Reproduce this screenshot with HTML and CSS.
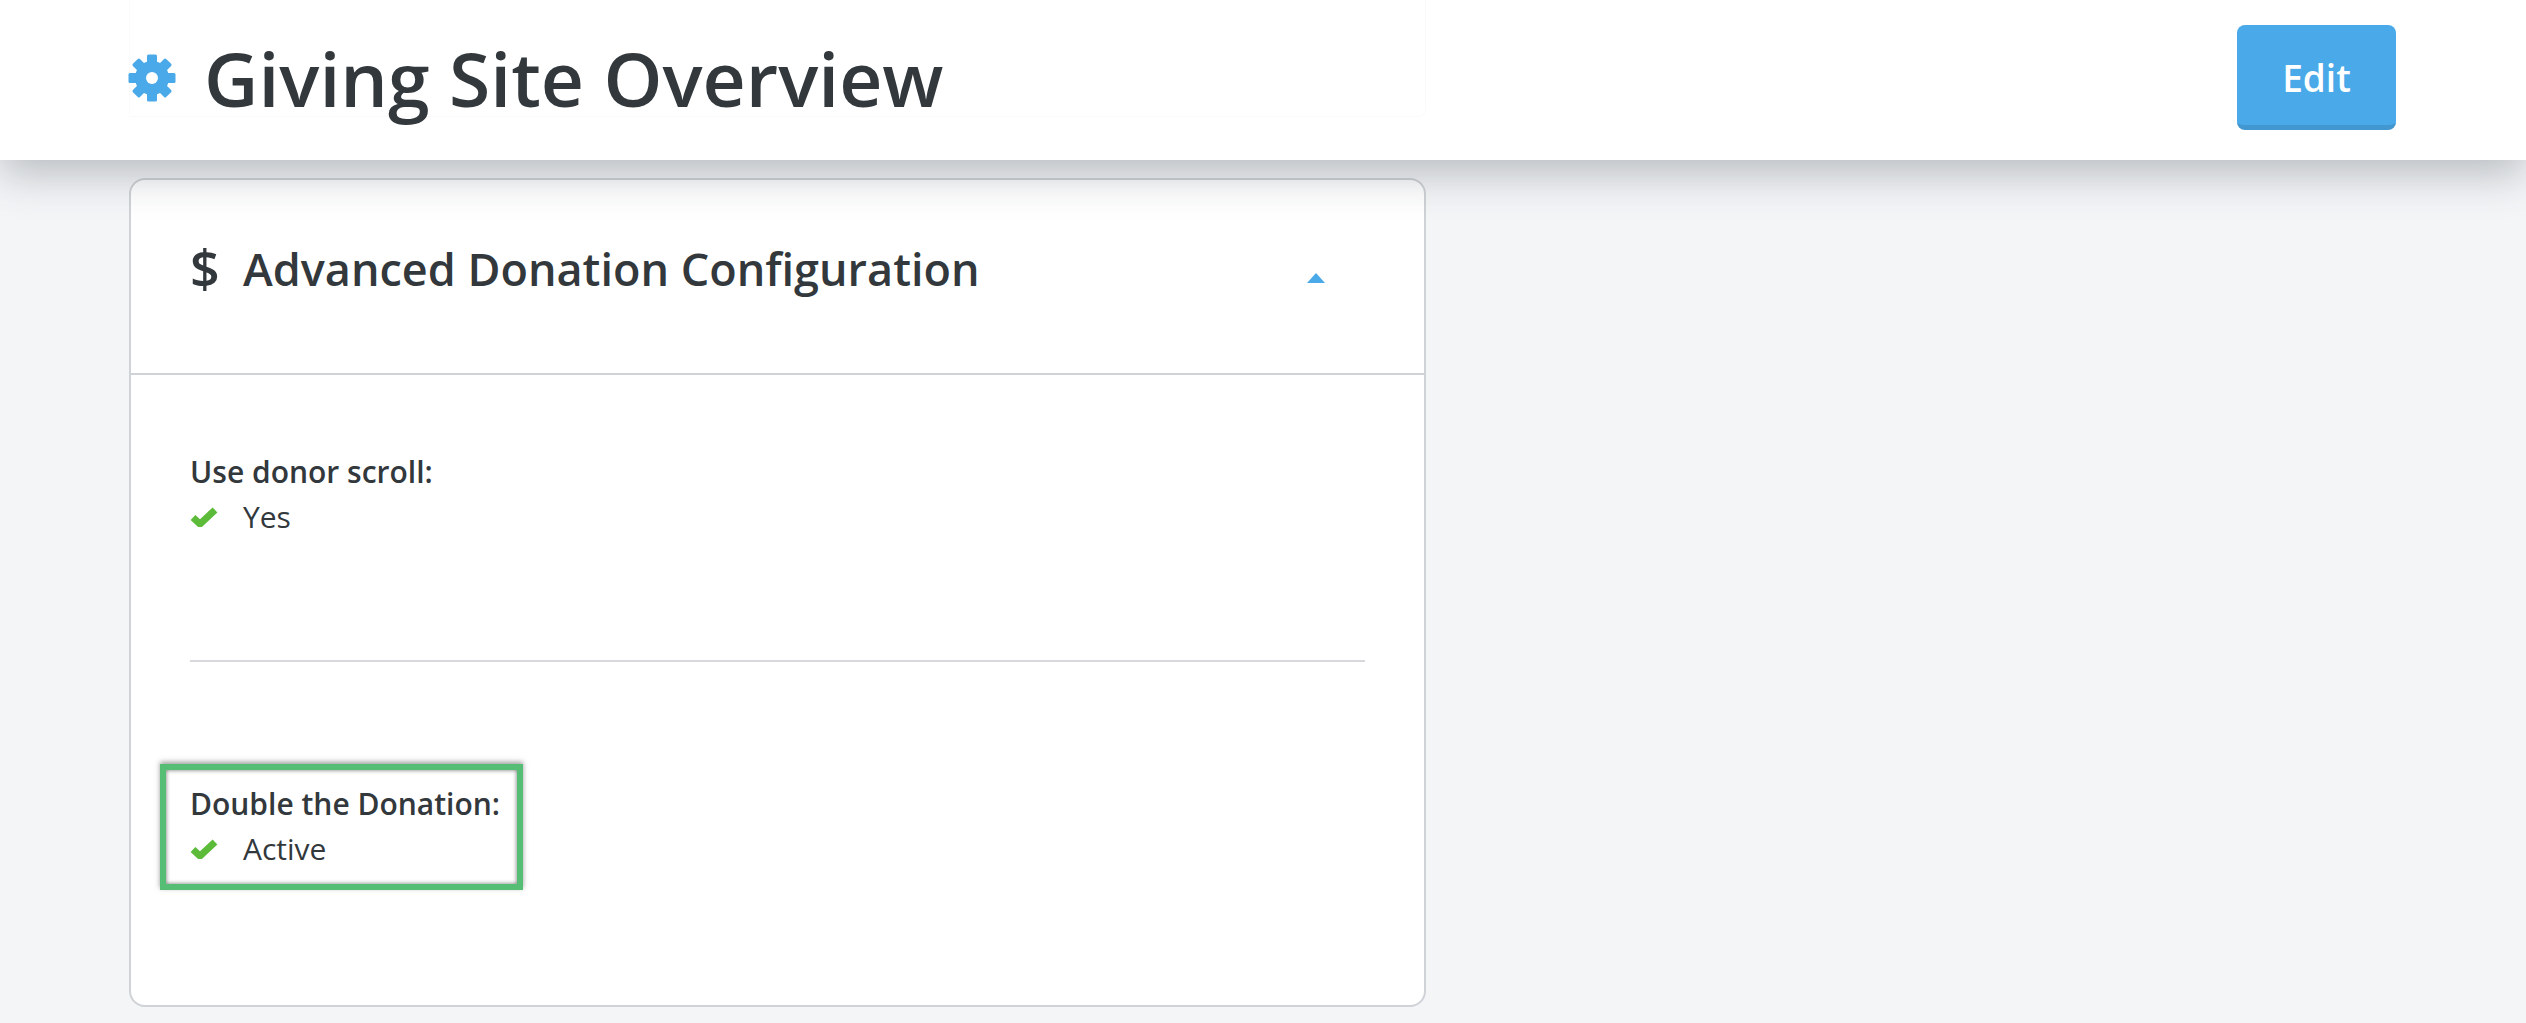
FILE: index.html
```html
<!DOCTYPE html>
<html lang="en">
<head>
<meta charset="UTF-8">
<title>Giving Site Overview</title>
<link rel="stylesheet" href="styles.css">
</head>
<body>
<header class="topbar">
  <div class="topbar-title">
    <svg class="gear" viewBox="-24 -24 48 48" aria-hidden="true">
      <g class="gear-teeth">
        <rect x="-5" y="-23.5" width="10" height="47" rx="1.5"/>
        <rect x="-5" y="-23.5" width="10" height="47" rx="1.5" transform="rotate(45)"/>
        <rect x="-5" y="-23.5" width="10" height="47" rx="1.5" transform="rotate(90)"/>
        <rect x="-5" y="-23.5" width="10" height="47" rx="1.5" transform="rotate(135)"/>
      </g>
      <circle class="gear-body" r="17"/>
      <circle class="gear-hole" r="6"/>
    </svg>
    <h1>Giving Site Overview</h1>
  </div>
  <button class="btn-edit" type="button">Edit</button>
</header>

<main class="page">
  <section class="card">
    <div class="card-head">
      <span class="card-icon">$</span>
      <h2>Advanced Donation Configuration</h2>
      <span class="caret"></span>
    </div>
    <div class="card-body">
      <div class="field">
        <div class="field-label">Use donor scroll:</div>
        <div class="field-value">
          <svg class="check" viewBox="0 0 28 20" aria-hidden="true"><path d="M3 10.5l7 6.5L25 3"/></svg>
          <span>Yes</span>
        </div>
      </div>
      <hr class="rule">
      <div class="field field-marked">
        <div class="field-label">Double the Donation:</div>
        <div class="field-value">
          <svg class="check" viewBox="0 0 28 20" aria-hidden="true"><path d="M3 10.5l7 6.5L25 3"/></svg>
          <span>Active</span>
        </div>
      </div>
    </div>
  </section>
</main>
</body>
</html>
```

FILE: styles.css
```css
:root {
  --bg: #f4f5f7;
  --text: #32383c;
  --blue: #4aa9e8;
  --line: #cfd2d6;
  --green: #5dbb3a;
}

* { margin: 0; padding: 0; box-sizing: border-box; }

html, body { height: 100%; }

body {
  background: var(--bg);
  color: var(--text);
  font-family: "Open Sans", "Liberation Sans", sans-serif;
  overflow: hidden;
}

/* Top bar */
.topbar {
  position: relative;
  z-index: 2;
  height: 160px;
  background: #fff;
  padding: 0 130px 0 129px;
  display: flex;
  justify-content: space-between;
  align-items: flex-start;
  box-shadow: 0 14px 40px rgba(60, 70, 80, 0.32);
}

.topbar-title {
  width: 1297px;
  height: 117px;
  display: flex;
  align-items: center;
  gap: 30px;
  padding-top: 40px;
  border-left: 1px solid #fbfbfb;
  border-right: 1px solid #fafafa;
  border-bottom: 1px solid #fafafa;
  border-bottom-right-radius: 8px;
}

.gear { width: 48px; height: 48px; flex-shrink: 0; margin-left: -2px; margin-right: -2px; }
.gear-teeth, .gear-body { fill: var(--blue); }
.gear-hole { fill: #fff; }

h1 {
  font-size: 75px;
  font-weight: 600;
  line-height: 1;
  margin-top: 1px;
}

.btn-edit {
  width: 159px;
  height: 105px;
  margin-top: 25px;
  padding-top: 4px;
  background: var(--blue);
  border: 0;
  border-bottom: 5px solid #4397d0;
  border-radius: 8px;
  color: #fff;
  font-family: inherit;
  font-size: 37px;
  font-weight: 600;
}

/* Card */
.page { padding: 18px 0 0 129px; }

.card {
  width: 1297px;
  height: 829px;
  background: #fff;
  border: 2px solid var(--line);
  border-radius: 16px;
}

.card-head {
  height: 195px;
  padding: 0 59px;
  display: flex;
  align-items: center;
  border-bottom: 2px solid var(--line);
}

.card-icon {
  width: 53px;
  font-size: 52px;
  font-weight: 600;
  line-height: 1.2;
  margin-top: -16px;
}

h2 {
  flex: 1;
  font-size: 45px;
  font-weight: 600;
  line-height: 1.2;
  margin-top: -16px;
}

.caret {
  width: 0;
  height: 0;
  margin-right: 40px;
  margin-top: 2px;
  border-left: 9px solid transparent;
  border-right: 9px solid transparent;
  border-bottom: 10px solid var(--blue);
}

.card-body { padding: 76px 59px 0; }

.field-label {
  font-size: 30px;
  font-weight: 600;
  line-height: 42px;
}

.field-value {
  display: flex;
  align-items: center;
  gap: 25px;
  font-size: 30px;
  line-height: 48px;
}

.check { width: 28px; height: 20px; flex-shrink: 0; }
.check path { fill: none; stroke: var(--green); stroke-width: 7; }

.rule {
  border: 0;
  border-top: 2px solid #d6d8db;
  margin: 119px 0 121px;
}

/* Annotation box drawn over the field */
.field-marked { position: relative; }

.field-marked::after {
  content: "";
  box-sizing: border-box;
  position: absolute;
  left: -30px;
  top: -19px;
  width: 363px;
  height: 126px;
  border: 6px solid #56bd74;
  box-shadow: inset 0 0 4px rgba(50, 50, 50, 0.7), 0 -2px 5px rgba(60, 60, 60, 0.5);
}
```
